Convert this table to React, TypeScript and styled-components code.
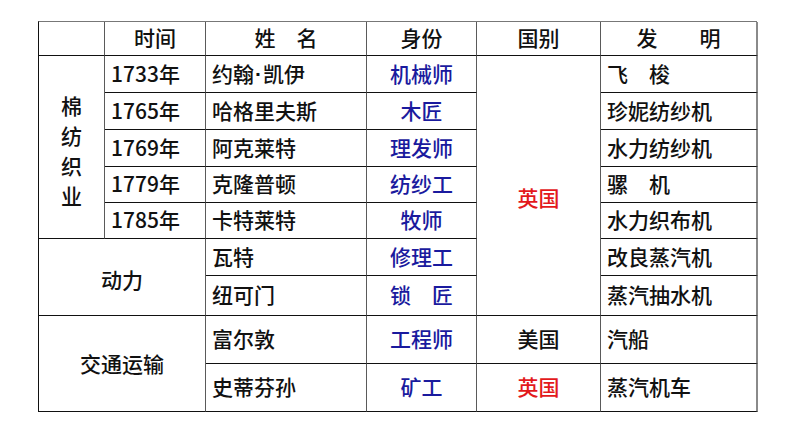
import React from "react";
import styled, { createGlobalStyle } from "styled-components";

const Global = createGlobalStyle`
  html, body { margin: 0; padding: 0; background: #ffffff; }
  body { font-family: "Noto Sans CJK SC", "Noto Sans", sans-serif; }
  * { box-sizing: border-box; }
`;

const Page = styled.div`
  width: 794px;
  height: 447px;
  padding: 21px 0 0 38px;
  background: #fff;
`;

const Table = styled.div`
  display: grid;
  width: 719px;
  grid-template-columns: 66px 101px 161px 110px 124px 157px;
  grid-template-rows: 34px 37px 37px 37px 36px 36px 37px 40px 48px 48px;
  border-left: 1px solid #111;
  border-top: 1px solid #777;
`;

type Align = "left" | "center";

const Cell = styled.div<{
  $col: number;
  $row: number;
  $cs?: number;
  $rs?: number;
  $align?: Align;
  $color?: string;
  $last?: boolean;
  $padTop?: number;
}>`
  grid-column: ${(p) => p.$col} / span ${(p) => p.$cs ?? 1};
  grid-row: ${(p) => p.$row} / span ${(p) => p.$rs ?? 1};
  display: flex;
  align-items: ${(p) => (p.$padTop ? "flex-start" : "center")};
  justify-content: ${(p) => (p.$align === "left" ? "flex-start" : "center")};
  padding: ${(p) => (p.$padTop ? `${p.$padTop}px 6px 0 6px` : "0 6px 2px 6px")};
  border-right: ${(p) => (p.$last ? "2px solid #8a8a8a" : "1px solid #5a5a5a")};
  border-bottom: 1px solid #111;
  font-size: 21px;
  font-weight: 500;
  line-height: 1;
  color: ${(p) => p.$color ?? "#111"};
  white-space: pre;
`;

const Vertical = styled.div`
  display: flex;
  flex-direction: column;
  align-items: center;
  gap: 9px;
  padding-top: 8px;
`;

const GroupLabel = styled.span<{ $shift: number }>`
  padding-top: ${(p) => p.$shift}px;
`;

const Dot = styled.span`
  font-family: "Liberation Sans", Arial, sans-serif;
  font-weight: 700;
  margin: 0 1px;
`;

const BLUE = "#1a1a9e";
const RED = "#e3191c";

const headers = ["", "时间", "姓　名", "身份", "国别", "发　　明"];

const textileRows: [string, React.ReactNode, string, string][] = [
  [
    "1733年",
    <>
      约翰<Dot>·</Dot>凯伊
    </>,
    "机械师",
    "飞　梭",
  ],
  ["1765年", "哈格里夫斯", "木匠", "珍妮纺纱机"],
  ["1769年", "阿克莱特", "理发师", "水力纺纱机"],
  ["1779年", "克隆普顿", "纺纱工", "骡　机"],
  ["1785年", "卡特莱特", "牧师", "水力织布机"],
];

const powerRows = [
  ["瓦特", "修理工", "改良蒸汽机"],
  ["纽可门", "锁　匠", "蒸汽抽水机"],
];

const transportRows = [
  ["富尔敦", "工程师", "美国", "#111", "汽船"],
  ["史蒂芬孙", "矿工", "英国", RED, "蒸汽机车"],
];

export default function App() {
  return (
    <Page>
      <Global />
      <Table>
        {headers.map((h, i) => (
          <Cell key={`h${i}`} $col={i + 1} $row={1} $last={i === 5}>
            {h}
          </Cell>
        ))}

        <Cell $col={1} $row={2} $rs={5}>
          <Vertical>
            {"棉纺织业".split("").map((c) => (
              <span key={c}>{c}</span>
            ))}
          </Vertical>
        </Cell>

        {textileRows.map((r, i) => (
          <React.Fragment key={`t${i}`}>
            <Cell $col={2} $row={i + 2} $align="left">{r[0]}</Cell>
            <Cell $col={3} $row={i + 2} $align="left">{r[1]}</Cell>
            <Cell $col={4} $row={i + 2} $color={BLUE}>{r[2]}</Cell>
            <Cell $col={6} $row={i + 2} $align="left" $last>{r[3]}</Cell>
          </React.Fragment>
        ))}

        <Cell $col={5} $row={2} $rs={7} $color={RED} $padTop={131}>
          英国
        </Cell>

        <Cell $col={1} $row={7} $cs={2} $rs={2}>
          <GroupLabel $shift={6}>动力</GroupLabel>
        </Cell>
        {powerRows.map((r, i) => (
          <React.Fragment key={`p${i}`}>
            <Cell $col={3} $row={i + 7} $align="left">{r[0]}</Cell>
            <Cell $col={4} $row={i + 7} $color={BLUE}>{r[1]}</Cell>
            <Cell $col={6} $row={i + 7} $align="left" $last>{r[2]}</Cell>
          </React.Fragment>
        ))}

        <Cell $col={1} $row={9} $cs={2} $rs={2}>
          <GroupLabel $shift={2}>交通运输</GroupLabel>
        </Cell>
        {transportRows.map((r, i) => (
          <React.Fragment key={`tr${i}`}>
            <Cell $col={3} $row={i + 9} $align="left">{r[0]}</Cell>
            <Cell $col={4} $row={i + 9} $color={BLUE}>{r[1]}</Cell>
            <Cell $col={5} $row={i + 9} $color={r[3]}>{r[2]}</Cell>
            <Cell $col={6} $row={i + 9} $align="left" $last>{r[4]}</Cell>
          </React.Fragment>
        ))}
      </Table>
    </Page>
  );
}
